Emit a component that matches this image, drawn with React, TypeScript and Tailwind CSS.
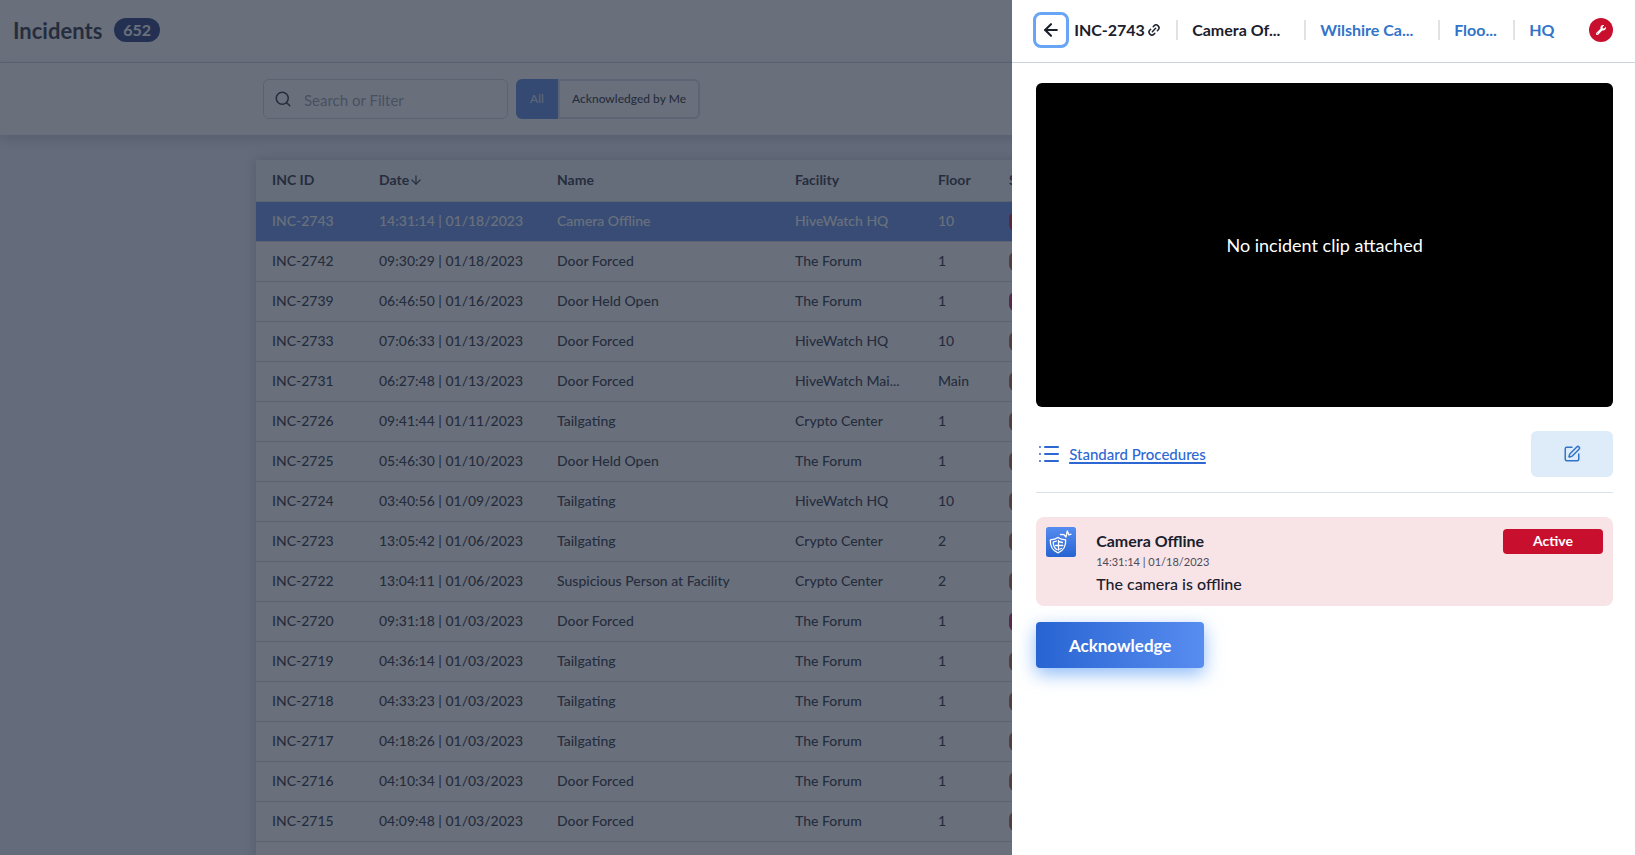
import { ArrowDown, ArrowLeft, Link2, List, Search, SquarePen } from 'lucide-react'
import { FaWrench } from 'react-icons/fa'

const incidents = [
  { id: 'INC-2743', date: '14:31:14 | 01/18/2023', name: 'Camera Offline', facility: 'HiveWatch HQ', floor: '10', level: 'bg-[#c8102e]' },
  { id: 'INC-2742', date: '09:30:29 | 01/18/2023', name: 'Door Forced', facility: 'The Forum', floor: '1', level: 'bg-[#b45a33]' },
  { id: 'INC-2739', date: '06:46:50 | 01/16/2023', name: 'Door Held Open', facility: 'The Forum', floor: '1', level: 'bg-[#c0114e]' },
  { id: 'INC-2733', date: '07:06:33 | 01/13/2023', name: 'Door Forced', facility: 'HiveWatch HQ', floor: '10', level: 'bg-[#b45a33]' },
  { id: 'INC-2731', date: '06:27:48 | 01/13/2023', name: 'Door Forced', facility: 'HiveWatch Mai...', floor: 'Main', level: 'bg-[#b45a33]' },
  { id: 'INC-2726', date: '09:41:44 | 01/11/2023', name: 'Tailgating', facility: 'Crypto Center', floor: '1', level: 'bg-[#b45a33]' },
  { id: 'INC-2725', date: '05:46:30 | 01/10/2023', name: 'Door Held Open', facility: 'The Forum', floor: '1', level: 'bg-[#b45a33]' },
  { id: 'INC-2724', date: '03:40:56 | 01/09/2023', name: 'Tailgating', facility: 'HiveWatch HQ', floor: '10', level: 'bg-[#b45a33]' },
  { id: 'INC-2723', date: '13:05:42 | 01/06/2023', name: 'Tailgating', facility: 'Crypto Center', floor: '2', level: 'bg-[#b45a33]' },
  { id: 'INC-2722', date: '13:04:11 | 01/06/2023', name: 'Suspicious Person at Facility', facility: 'Crypto Center', floor: '2', level: 'bg-[#b45a33]' },
  { id: 'INC-2720', date: '09:31:18 | 01/03/2023', name: 'Door Forced', facility: 'The Forum', floor: '1', level: 'bg-[#c0114e]' },
  { id: 'INC-2719', date: '04:36:14 | 01/03/2023', name: 'Tailgating', facility: 'The Forum', floor: '1', level: 'bg-[#b45a33]' },
  { id: 'INC-2718', date: '04:33:23 | 01/03/2023', name: 'Tailgating', facility: 'The Forum', floor: '1', level: 'bg-[#b45a33]' },
  { id: 'INC-2717', date: '04:18:26 | 01/03/2023', name: 'Tailgating', facility: 'The Forum', floor: '1', level: 'bg-[#b45a33]' },
  { id: 'INC-2716', date: '04:10:34 | 01/03/2023', name: 'Door Forced', facility: 'The Forum', floor: '1', level: 'bg-[#b45a33]' },
  { id: 'INC-2715', date: '04:09:48 | 01/03/2023', name: 'Door Forced', facility: 'The Forum', floor: '1', level: 'bg-[#b45a33]' },
]

const selectedId = 'INC-2743'

function ShieldLogo() {
  return (
    <svg viewBox="0 0 30 30" className="w-[30px] h-[30px] shrink-0" aria-hidden="true">
      <defs>
        <linearGradient id="tile" x1="0" y1="0" x2="0" y2="1">
          <stop offset="0" stopColor="#568cf0" />
          <stop offset="1" stopColor="#2764d2" />
        </linearGradient>
      </defs>
      <rect width="30" height="30" rx="2.5" fill="url(#tile)" />
      <g fill="none" stroke="#fff" strokeWidth="1.3" strokeLinecap="round" strokeLinejoin="round">
        <path d="M12 10.500c-2.200 1.600-4.700 2.200-7.700 2.400-.3 6.300 1.700 10.600 7.700 13 6-2.400 8-6.700 7.700-13-3-.2-5.500-.8-7.700-2.400z" />
        <path d="M10.500 14l-3.300 1.200c.2 3.600 1.300 6 3.800 7.500M12.500 13.500v9.500M12.500 14.500l4 1M12.500 18.500h4.300M12.500 22.500l3-1M9.500 18.500h3" />
        <path d="M14.500 7.500l3.500.2 2 2.300 1.300-6 1.700 4 2-.8" />
      </g>
    </svg>
  )
}

function Header() {
  return (
    <header className="flex items-center gap-3 h-[63px] px-[13px] pb-0.5 bg-white border-b border-[#cbd2dc]">
      <h1 className="text-[22px] font-bold text-[#1a202c]">Incidents</h1>
      <span className="h-6 px-[9px] rounded-full bg-[#1a2a72] text-white text-base font-bold">652</span>
    </header>
  )
}

function Toolbar() {
  return (
    <div className="relative flex gap-2 h-[72px] pt-4 px-[263px] bg-white shadow-[0_4px_12px_rgba(40,50,90,0.25)]">
      <label className="flex items-center w-[245px] h-10 px-2.5 border border-[#cbd2dc] rounded-md">
        <Search className="w-[18px] h-[18px] shrink-0 text-[#1a202c]" aria-hidden="true" />
        <input
          type="text"
          aria-label="Search incidents"
          placeholder="Search or Filter"
          className="w-full ml-3 pt-0.5 text-[15px] outline-none placeholder:text-[#8f95a5]"
        />
      </label>
      <div className="flex h-10 text-xs font-medium">
        <button type="button" className="w-[42px] rounded-l-md bg-[#5080e0] text-[#d5dbe8]">All</button>
        <button type="button" className="w-[142px] rounded-r-md border-2 border-[#d3d7e6] text-[#1a202c] whitespace-nowrap">
          Acknowledged by Me
        </button>
      </div>
    </div>
  )
}

function IncidentTable() {
  return (
    <div className="mx-64 mt-[25px] bg-white shadow-[0_0_12px_rgba(40,50,90,0.3)]">
      <table className="w-full table-fixed text-sm text-left text-[#1a202c]">
        <colgroup>
          <col className="w-[107px]" />
          <col className="w-[178px]" />
          <col className="w-[238px]" />
          <col className="w-[143px]" />
          <col className="w-[71px]" />
          <col />
        </colgroup>
        <thead className="bg-[#f1f2f7]">
          <tr className="h-[41px] border-b border-[#d3d7de]">
            <th className="pl-4 font-bold">INC ID</th>
            <th className="pl-4 font-bold">
              <span className="flex items-center">
                Date
                <ArrowDown className="w-3.5 h-3.5" aria-hidden="true" />
              </span>
            </th>
            <th className="pl-4 font-bold">Name</th>
            <th className="pl-4 font-bold">Facility</th>
            <th className="pl-4 font-bold">Floor</th>
            <th className="pl-4 font-bold">Severity</th>
          </tr>
        </thead>
        <tbody className="font-medium">
          {incidents.map((incident) => (
            <tr
              key={incident.id}
              className={
                incident.id === selectedId
                  ? 'h-10 border-b border-[#d3d7de] bg-[#5a88e6] text-white'
                  : 'h-10 border-b border-[#d3d7de]'
              }
            >
              <td className="pl-4">{incident.id}</td>
              <td className="pl-4">{incident.date}</td>
              <td className="pl-4">{incident.name}</td>
              <td className="pl-4">{incident.facility}</td>
              <td className="pl-4">{incident.floor}</td>
              <td className="pl-4">
                <span className={`block w-20 h-[19px] rounded-md ${incident.level}`} />
              </td>
            </tr>
          ))}
          <tr className="h-10">
            <td colSpan={6} />
          </tr>
        </tbody>
      </table>
    </div>
  )
}

function Divider() {
  return <span className="w-0.5 h-5 shrink-0 bg-[#e2e2e2]" />
}

function IncidentPanel() {
  return (
    <aside className="fixed inset-y-0 right-0 w-8/21 bg-white text-[#1a202c] overflow-y-auto">
      {/* Breadcrumb */}
      <div className="flex items-center justify-between h-[63px] pl-[21px] pr-[22px] pb-0.5 border-b border-[#cbd5e0] text-base font-bold whitespace-nowrap">
        <div className="flex items-center">
          <button
            type="button"
            aria-label="Back"
            className="flex items-center justify-center w-9 h-9 rounded-lg border-3 border-[#68a5f5]"
          >
            <ArrowLeft className="w-5 h-5" strokeWidth={2.5} />
          </button>
          <span className="w-[78px] pl-[5px]">INC-2743</span>
          <button type="button" aria-label="Copy link" className="w-[29px]">
            <Link2 className="w-3.5 h-3.5 -rotate-45" strokeWidth={2.5} />
          </button>
          <Divider />
          <span className="w-[126px] pl-3.5">Camera Of...</span>
          <Divider />
          <a href="#facility" className="w-[132px] pl-3.5 text-[#3274c8]">Wilshire Ca...</a>
          <Divider />
          <a href="#floor" className="w-[73px] pl-3.5 text-[#3274c8]">Floo...</a>
          <Divider />
          <a href="#site" className="pl-3.5 text-[#3274c8]">HQ</a>
        </div>
        <span className="flex items-center justify-center w-6 h-6 rounded-full bg-[#c8102e] text-white">
          <FaWrench className="w-2.5 h-2.5" />
        </span>
      </div>

      <div className="pt-5 pl-6 pr-[22px]">
        {/* Clip */}
        <div className="flex items-center justify-center aspect-video rounded-md bg-black text-white text-lg">
          No incident clip attached
        </div>

        {/* Procedures */}
        <div className="flex items-center justify-between mt-6 pb-[15px] border-b border-[#dbe1ea]">
          <a href="#procedures" className="flex items-center gap-2 pl-px text-[15px] font-medium text-[#2c67d3]">
            <List className="w-6 h-6" />
            <span className="underline decoration-2 underline-offset-2">Standard Procedures</span>
          </a>
          <button
            type="button"
            aria-label="Edit procedures"
            className="flex items-center justify-center w-[82px] h-[46px] rounded-md bg-[#deebf9] text-[#3274c8]"
          >
            <SquarePen className="w-[18px] h-[18px]" />
          </button>
        </div>

        {/* Alert */}
        <div className="flex items-start mt-6 h-[89px] p-2.5 rounded-lg bg-[#f8e4e6]">
          <ShieldLogo />
          <div className="flex-1 pl-5 pt-1">
            <h2 className="text-base/5 font-bold">Camera Offline</h2>
            <p className="text-[11px]/[22px] text-[#4a4a58]">14:31:14 | 01/18/2023</p>
            <p className="text-base/[22px] font-medium">The camera is offline</p>
          </div>
          <span className="w-[100px] h-[25px] mt-0.5 rounded bg-[#c8102e] text-white text-sm/6 font-bold text-center">Active</span>
        </div>

        <button
          type="button"
          className="mt-4 w-[168px] h-[46px] rounded bg-linear-to-r from-[#2764d2] to-[#588df0] text-white text-[17px] font-bold shadow-[0_6px_18px_rgba(80,150,245,0.65)]"
        >
          Acknowledge
        </button>
      </div>
    </aside>
  )
}

export default function App() {
  return (
    <div className="h-screen overflow-hidden bg-[#eeeffb] font-[Lato,sans-serif]">
      <Header />
      <Toolbar />
      <IncidentTable />
      <div className="fixed inset-0 bg-[#2a3344]/70" />
      <IncidentPanel />
    </div>
  )
}
